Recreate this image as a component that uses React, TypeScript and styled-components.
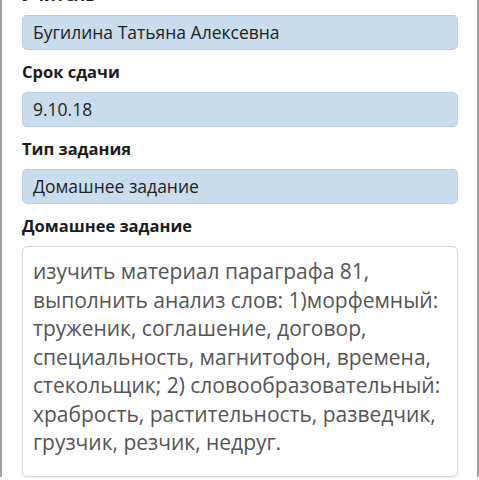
import styled, { createGlobalStyle } from "styled-components";

const GlobalStyle = createGlobalStyle`
  html, body {
    margin: 0;
    padding: 0;
    background: #ffffff;
  }
  body {
    font-family: "Open Sans", "Noto Sans", sans-serif;
  }
`;

const Viewport = styled.div`
  width: 479px;
  height: 480px;
  overflow: hidden;
  background: #ffffff;
`;

const Card = styled.div`
  width: 479px;
  box-sizing: border-box;
  margin-top: -27px;
  padding: 0 19px 0 20px;
  border-left: 2px solid #a3a3a3;
  border-right: 2px solid #a3a3a3;
  display: flex;
  flex-direction: column;
`;

const Label = styled.div`
  margin: 10px 0 8px;
  font-size: 16.5px;
  line-height: 24px;
  font-weight: 700;
  color: #1c1c1c;
`;

const Field = styled.div`
  height: 35px;
  box-sizing: border-box;
  display: flex;
  align-items: center;
  padding: 0 10px 1px;
  background: #c9ddee;
  border: 1px solid #b9cfe2;
  border-radius: 5px;
  font-size: 17.5px;
  color: #222222;
`;

const TextArea = styled.div`
  height: 231px;
  box-sizing: border-box;
  padding: 10px 8px 0 10px;
  background: #ffffff;
  border: 1px solid #d6d6d6;
  border-radius: 5px;
  box-shadow: 0 1px 2px rgba(0, 0, 0, 0.08);
  font-size: 21px;
  line-height: 28.5px;
  color: #555555;
`;

interface Entry {
  label: string;
  value: string;
}

const fields: Entry[] = [
  { label: "Учитель", value: "Бугилина Татьяна Алексевна" },
  { label: "Срок сдачи", value: "9.10.18" },
  { label: "Тип задания", value: "Домашнее задание" },
];

const homework =
  "изучить материал параграфа 81, выполнить анализ слов: 1)морфемный: труженик, соглашение, договор, специальность, магнитофон, времена, стекольщик; 2) словообразовательный: храбрость, растительность, разведчик, грузчик, резчик, недруг.";

function App() {
  return (
    <Viewport>
      <GlobalStyle />
      <Card>
        {fields.map((f) => (
          <div key={f.label}>
            <Label>{f.label}</Label>
            <Field>{f.value}</Field>
          </div>
        ))}
        <Label>Домашнее задание</Label>
        <TextArea>{homework}</TextArea>
      </Card>
    </Viewport>
  );
}

export default App;
